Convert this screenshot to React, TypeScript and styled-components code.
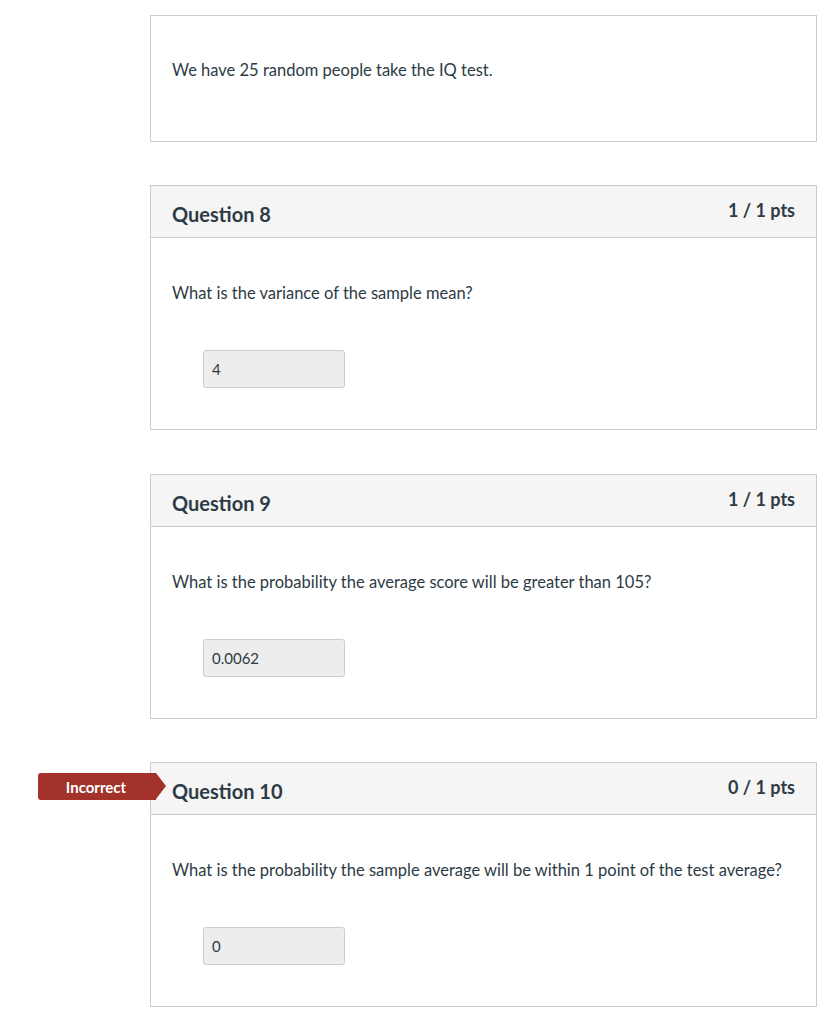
import React from "react";
import styled, { createGlobalStyle } from "styled-components";

const GlobalStyle = createGlobalStyle`
  body {
    margin: 0;
    background: #ffffff;
    font-family: Lato, "Open Sans", "Liberation Sans", sans-serif;
    color: #2d3b45;
  }
`;

type Question = {
  title: string;
  pts: string;
  text: string;
  answer: string;
  incorrect?: boolean;
};

const questions: Question[] = [
  { title: "Question 8", pts: "1 / 1 pts", text: "What is the variance of the sample mean?", answer: "4" },
  {
    title: "Question 9",
    pts: "1 / 1 pts",
    text: "What is the probability the average score will be greater than 105?",
    answer: "0.0062",
  },
  {
    title: "Question 10",
    pts: "0 / 1 pts",
    text: "What is the probability the sample average will be within 1 point of the test average?",
    answer: "0",
    incorrect: true,
  },
];

const App = () => {
  return (
    <Page>
      <GlobalStyle />
      <IntroCard>
        <BodyText>We have 25 random people take the IQ test.</BodyText>
      </IntroCard>
      {questions.map((q) => (
        <Card key={q.title}>
          {q.incorrect && <Badge>Incorrect</Badge>}
          <Header>
            <Title>{q.title}</Title>
            <Points>{q.pts}</Points>
          </Header>
          <Body>
            <BodyText>{q.text}</BodyText>
            <Answer>{q.answer}</Answer>
          </Body>
        </Card>
      ))}
    </Page>
  );
};

export default App;

const Page = styled.div`
  width: 835px;
  padding: 15px 0 17px 150px;
  box-sizing: border-box;
  display: flex;
  flex-direction: column;
  gap: 43.5px;
`;

const IntroCard = styled.div`
  width: 667px;
  height: 126.5px;
  box-sizing: border-box;
  border: 1px solid #c7cdd1;
  padding: 44px 21px 0;
`;

const Card = styled.div`
  position: relative;
  width: 667px;
  box-sizing: border-box;
  border: 1px solid #c7cdd1;
`;

const Header = styled.div`
  height: 52px;
  box-sizing: border-box;
  background: #f5f5f5;
  border-bottom: 1px solid #c7cdd1;
  display: flex;
  justify-content: space-between;
  align-items: center;
  padding: 0 21px;
`;

const Title = styled.div`
  font-size: 20px;
  font-weight: 700;
  padding-top: 5px;
`;

const Points = styled.div`
  font-size: 18px;
  font-weight: 700;
  padding-bottom: 3px;
`;

const Body = styled.div`
  padding: 45px 21px 41px;
  display: flex;
  flex-direction: column;
  align-items: flex-start;
  gap: 47px;
`;

const BodyText = styled.div`
  font-size: 16.5px;
  line-height: 20px;
`;

const Answer = styled.div`
  margin-left: 31px;
  width: 142px;
  height: 38px;
  box-sizing: border-box;
  background: #ededed;
  border: 1px solid #c7cdd1;
  border-radius: 3px;
  padding: 0 8px;
  display: flex;
  align-items: center;
  font-size: 15px;
`;

const Badge = styled.div`
  position: absolute;
  left: -113px;
  top: 10px;
  width: 118px;
  height: 27px;
  background: #a3322a;
  color: #ffffff;
  font-size: 15px;
  font-weight: 700;
  display: flex;
  align-items: center;
  justify-content: center;
  border-radius: 3px 0 0 3px;
  box-sizing: border-box;
  padding-right: 2px;

  &::after {
    content: "";
    position: absolute;
    right: -10px;
    top: 0;
    border-top: 13.5px solid transparent;
    border-bottom: 13.5px solid transparent;
    border-left: 10px solid #a3322a;
  }
`;
